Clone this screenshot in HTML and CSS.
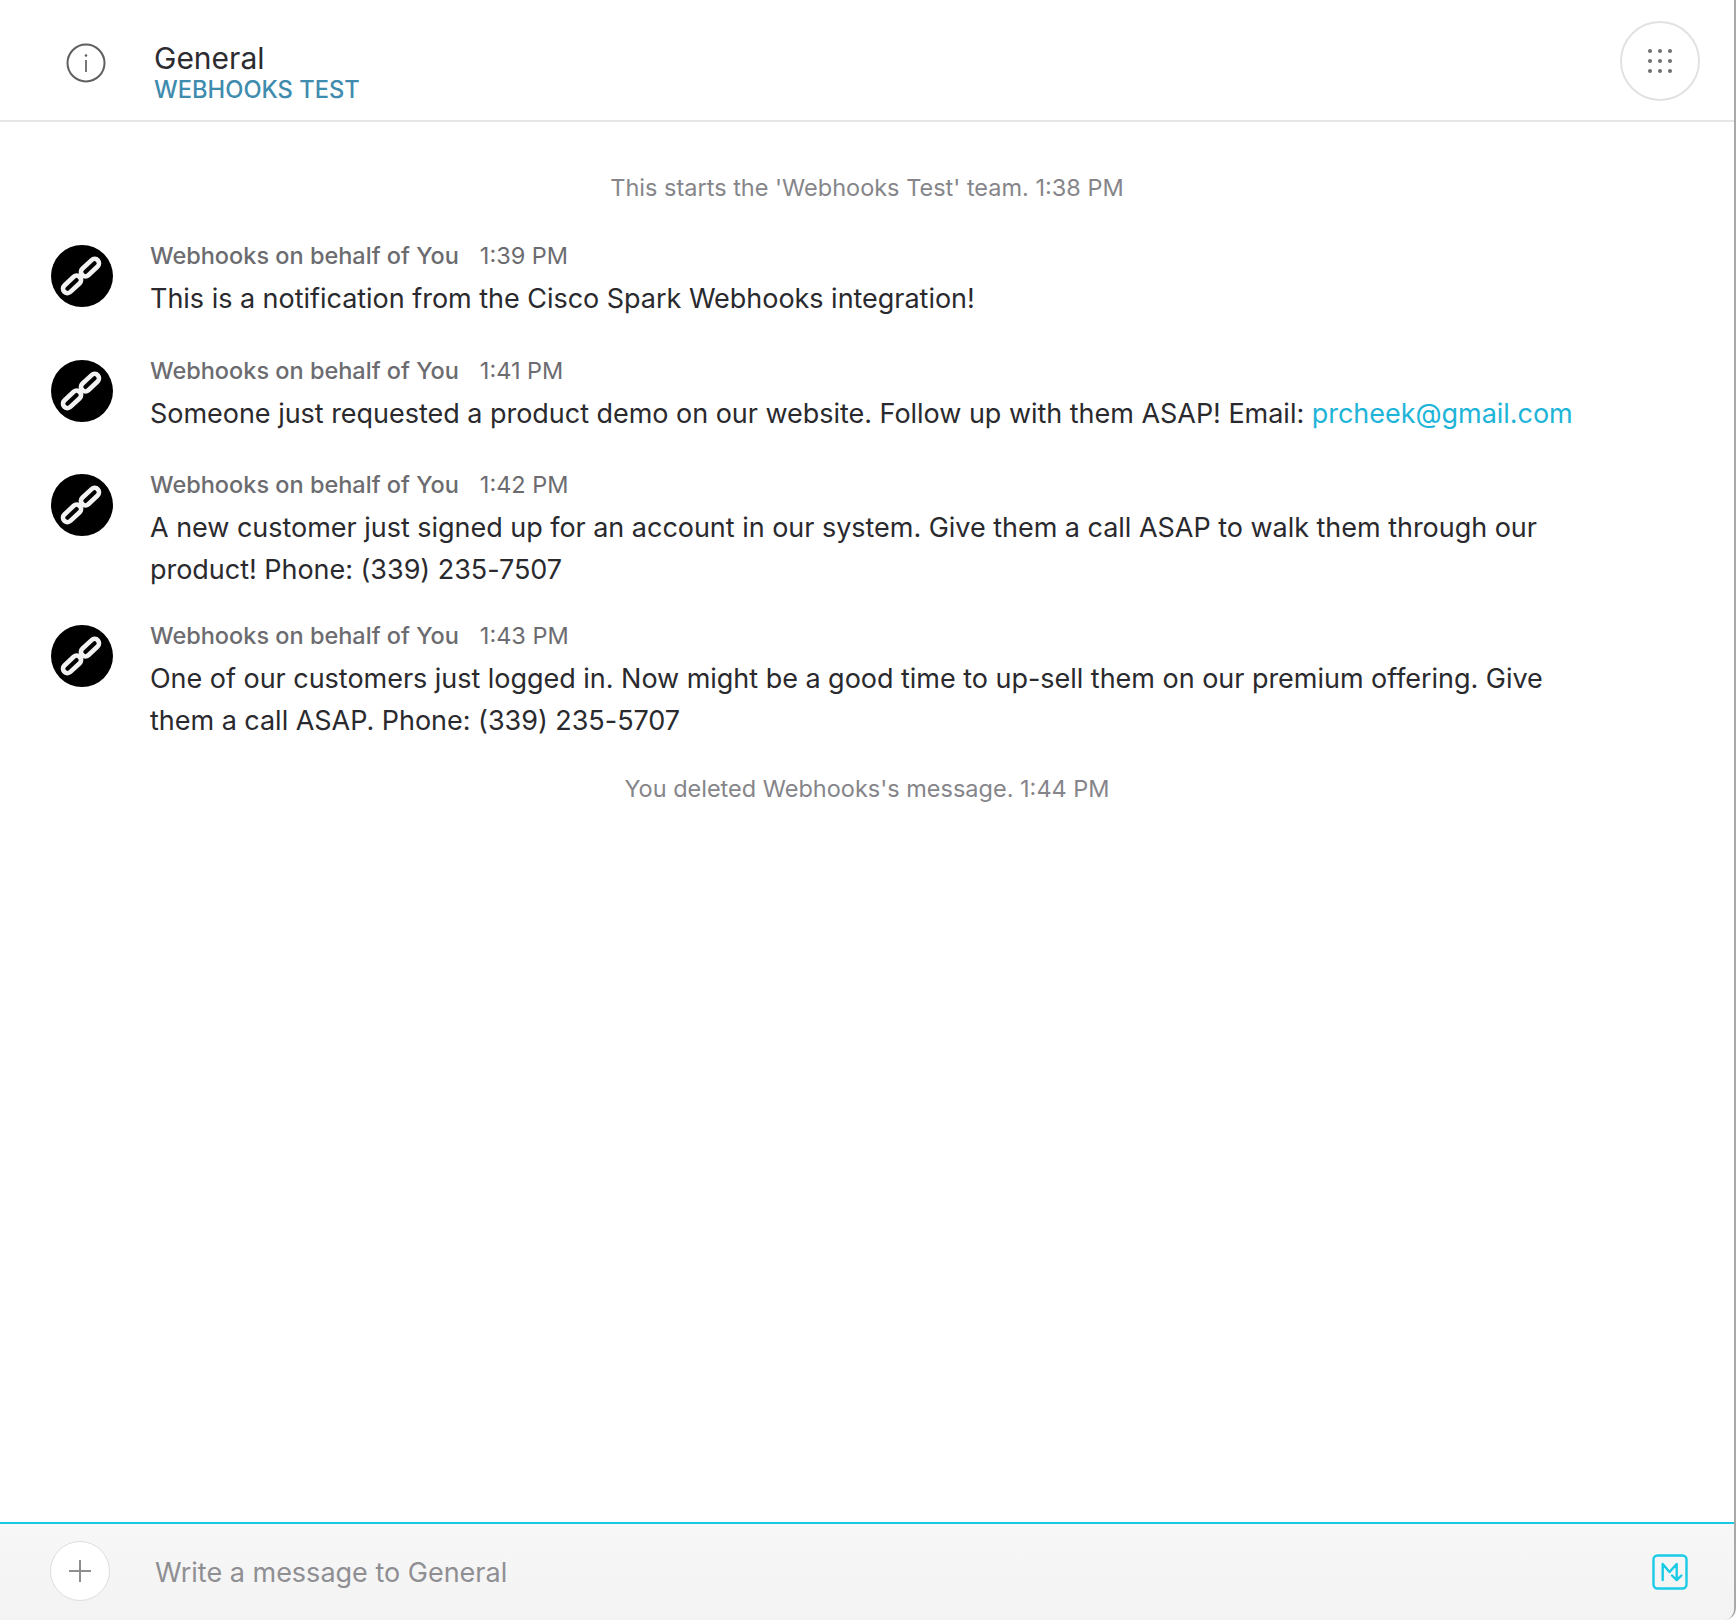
FILE: index.html
```html
<!DOCTYPE html>
<html lang="en">
<head>
<meta charset="utf-8">
<title>General</title>
<link rel="stylesheet" href="styles.css">
</head>
<body>
<div class="window">
  <header class="header">
    <svg class="info" viewBox="0 0 40 40" width="40" height="40"><circle cx="20" cy="20" r="18.5" fill="none" stroke="#5f5f62" stroke-width="2"/><circle cx="20" cy="12.5" r="1.2" fill="#555"/><path d="M20 17v12" stroke="#555" stroke-width="1.6"/></svg>
    <div class="titles">
      <div class="title">General</div>
      <div class="team">WEBHOOKS TEST</div>
    </div>
    <div class="apps">
      <svg viewBox="0 0 26 26" width="26" height="26"><g fill="#6f6f73"><circle cx="3" cy="3" r="2"/><circle cx="13" cy="3" r="2"/><circle cx="23" cy="3" r="2"/><circle cx="3" cy="13" r="2"/><circle cx="13" cy="13" r="2"/><circle cx="23" cy="13" r="2"/><circle cx="3" cy="23" r="2"/><circle cx="13" cy="23" r="2"/><circle cx="23" cy="23" r="2"/></g></svg>
    </div>
  </header>
  <main class="feed">
    <div class="system first">This starts the 'Webhooks Test' team. 1:38 PM</div>
    <div class="msg">
      <div class="avatar"><svg viewBox="0 0 62 62" width="62" height="62"><use href="#chain"/></svg></div>
      <div class="body"><div class="meta"><span class="who">Webhooks on behalf of You</span><span class="time">1:39 PM</span></div>
      <p class="text">This is a notification from the Cisco Spark Webhooks integration!</p></div>
    </div>
    <div class="msg">
      <div class="avatar"><svg viewBox="0 0 62 62" width="62" height="62"><use href="#chain"/></svg></div>
      <div class="body"><div class="meta"><span class="who">Webhooks on behalf of You</span><span class="time">1:41 PM</span></div>
      <p class="text">Someone just requested a product demo on our website. Follow up with them ASAP! Email: <a class="link" href="#">prcheek@gmail.com</a></p></div>
    </div>
    <div class="msg">
      <div class="avatar"><svg viewBox="0 0 62 62" width="62" height="62"><use href="#chain"/></svg></div>
      <div class="body"><div class="meta"><span class="who">Webhooks on behalf of You</span><span class="time">1:42 PM</span></div>
      <p class="text">A new customer just signed up for an account in our system. Give them a call ASAP to walk them through our product! Phone: (339) 235-7507</p></div>
    </div>
    <div class="msg">
      <div class="avatar"><svg viewBox="0 0 62 62" width="62" height="62"><use href="#chain"/></svg></div>
      <div class="body"><div class="meta"><span class="who">Webhooks on behalf of You</span><span class="time">1:43 PM</span></div>
      <p class="text">One of our customers just logged in. Now might be a good time to up-sell them on our premium offering. Give them a call ASAP. Phone: (339) 235-5707</p></div>
    </div>
    <div class="system last">You deleted Webhooks's message. 1:44 PM</div>
  </main>
  <footer class="composer">
    <div class="plus"><svg viewBox="0 0 24 24" width="24" height="24"><path d="M12 1v22M1 12h22" stroke="#8e8e90" stroke-width="2"/></svg></div>
    <div class="placeholder">Write a message to General</div>
    <svg class="md" viewBox="0 0 36 36" width="36" height="36" fill="none" stroke="#19cbe6" stroke-width="2.4" stroke-linecap="round" stroke-linejoin="round"><rect x="1.5" y="1.5" width="33" height="33" rx="4"/><path d="M10.7 26V10L17.5 18 24.7 10V26M20 21.5l4.7 4.7 4.7-4.7"/></svg>
  </footer>
</div>
<svg class="defs" width="0" height="0"><defs><g id="chain"><circle cx="31" cy="31" r="31" fill="#000"/><g fill="none" stroke="#f2f2f2" stroke-width="4.6" transform="translate(-1 0) rotate(-43 31 31)"><rect x="8" y="26.6" width="21.5" height="8.8" rx="4.4"/><rect x="32.5" y="26.6" width="21.5" height="8.8" rx="4.4"/><path d="M27 31h8" stroke-width="4"/></g></g></defs></svg>
</body>
</html>
```
FILE: styles.css
```css
html, body { margin: 0; padding: 0; height: 100%; background: #fff; }
body { font-family: Inter, "Liberation Sans", sans-serif; overflow: hidden; }
.window { width: 1734px; height: 1620px; border-right: 2px solid #a9a9a9; border-bottom-right-radius: 12px; display: flex; flex-direction: column; box-sizing: content-box; overflow: hidden; }
.header { height: 120px; flex: none; border-bottom: 2px solid #e6e6e6; display: flex; align-items: flex-start; box-sizing: content-box; position: relative; }
.info { margin: 43px 0 0 66px; flex: none; }
.titles { margin: 41px 0 0 48px; }
.title { font-size: 30px; line-height: 34px; color: #2c2c30; }
.team { font-size: 23.7px; line-height: 26px; margin-top: 2px; color: #3f8cae; font-weight: 500; }
.apps { margin: 21px 34px 0 auto; width: 80px; height: 80px; border: 2px solid #e2e2e2; border-radius: 50%; display: flex; align-items: center; justify-content: center; box-sizing: border-box; }
.feed { flex: 1; padding-top: 0; }
.system { text-align: center; font-size: 23.5px; line-height: 32px; color: #85858a; }
.system.first { margin-top: 50px; }
.system.last { margin-top: 31px; }
.msg { display: flex; min-height: 86px; padding-left: 51px; }
.msg + .msg { margin-top: 28.5px; }
.system.first + .msg { margin-top: 36px; }
.avatar { width: 62px; height: 62px; flex: none; margin-top: 5px; }
.avatar svg { display: block; }
.body { margin-left: 37px; width: 1430px; }
.meta { font-size: 23.5px; line-height: 32px; color: #6c6c70; }
.who { font-weight: 500; margin-right: 21px; }
.text { margin: 6px 0 0; font-size: 27px; letter-spacing: -0.03px; line-height: 42px; color: #2a2a2e; }
.link { color: #1eb4d8; text-decoration: none; }
.composer { height: 96px; flex: none; border-top: 2px solid #16c8e4; background: linear-gradient(#f7f7f7, #f3f3f3); display: flex; align-items: center; padding: 0 46px 0 50px; }
.plus { width: 60px; height: 60px; margin-bottom: 2px; border-radius: 50%; background: #fff; border: 1.5px solid #dedede; display: flex; align-items: center; justify-content: center; box-sizing: border-box; flex: none; }
.placeholder { margin-left: 45px; font-size: 27px; color: #8f8f93; flex: 1; }
.md { flex: none; }
.defs { position: absolute; }
```
